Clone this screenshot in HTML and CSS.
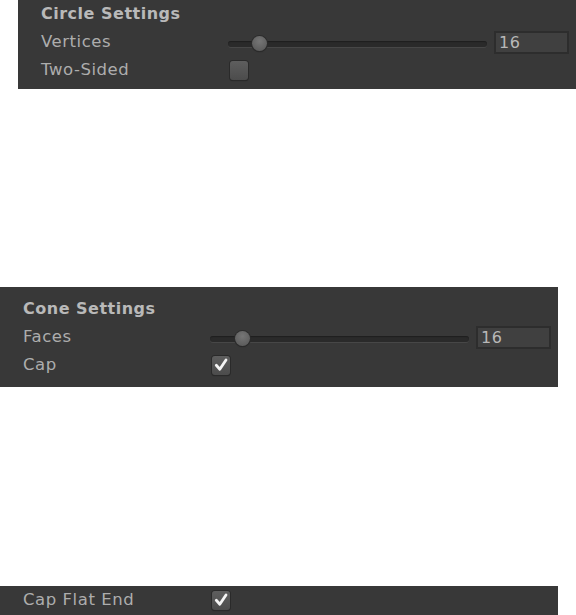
FILE: index.html
```html
<!DOCTYPE html>
<html>
<head>
<meta charset="utf-8">
<link rel="stylesheet" href="styles.css">
</head>
<body>
  <section class="panel panel-circle">
    <div class="row header">Circle Settings</div>
    <div class="row">
      <span class="label">Vertices</span>
      <div class="slider"><div class="track"></div><div class="thumb" style="left:24px"></div></div>
      <div class="field">16</div>
    </div>
    <div class="row">
      <span class="label">Two-Sided</span>
      <span class="checkbox"></span>
    </div>
  </section>

  <section class="panel panel-cone">
    <div class="row header">Cone Settings</div>
    <div class="row">
      <span class="label">Faces</span>
      <div class="slider"><div class="track"></div><div class="thumb" style="left:25px"></div></div>
      <div class="field">16</div>
    </div>
    <div class="row">
      <span class="label">Cap</span>
      <span class="checkbox checked"><svg viewBox="0 0 18 18" width="18" height="18"><path d="M4.3 9.3 L7.8 13.2 L14 4" fill="none" stroke="#f4f4f4" stroke-width="2.8" stroke-linecap="round" stroke-linejoin="round"/></svg></span>
    </div>
  </section>

  <section class="panel panel-end">
    <div class="row">
      <span class="label">Cap Flat End</span>
      <span class="checkbox checked"><svg viewBox="0 0 18 18" width="18" height="18"><path d="M4.3 9.3 L7.8 13.2 L14 4" fill="none" stroke="#f4f4f4" stroke-width="2.8" stroke-linecap="round" stroke-linejoin="round"/></svg></span>
    </div>
  </section>
</body>
</html>
```

FILE: styles.css
```css
html, body {
  margin: 0;
  padding: 0;
  background: #ffffff;
}

body {
  font-family: "DejaVu Sans", "Liberation Sans", sans-serif;
  font-size: 16.5px;
  color: #adadad;
  overflow: hidden;
}

.panel {
  width: 558px;
  background: #383838;
  box-sizing: border-box;
  padding: 8px 7px 8px 23px;
}

.panel-circle {
  margin-left: 18px;
  padding-top: 0;
  padding-bottom: 5px;
}

.panel-cone {
  margin-top: 198px;
}

.panel-end {
  margin-top: 199px;
  padding-top: 0;
  height: 40px;
}

.row {
  display: flex;
  align-items: center;
  height: 28px;
  line-height: 28px;
}

.header {
  font-size: 16px;
  font-weight: bold;
  color: #b9b9b9;
  letter-spacing: 0.5px;
}

.label {
  width: 187px;
  flex: none;
  letter-spacing: 0.55px;
}

.slider {
  position: relative;
  flex: 1;
  height: 16px;
  margin-top: 3px;
}

.track {
  position: absolute;
  left: 0;
  right: 0;
  top: 5px;
  height: 6px;
  border-radius: 3px;
  background: #2a2a2a;
  box-shadow: 0 1px 0 #474747, inset 0 1px 1px #1f1f1f;
}

.thumb {
  position: absolute;
  top: 0;
  width: 15px;
  height: 15px;
  border-radius: 50%;
  background: radial-gradient(circle at 50% 35%, #767676 0%, #626262 60%, #555555 100%);
  box-shadow: 0 0 0 1px #2c2c2c, 0 1px 1px #222;
}

.field {
  flex: none;
  width: 75px;
  height: 23px;
  box-sizing: border-box;
  margin-left: 7px;
  border: 2px solid #2d2d2d;
  background: #404040;
  color: #b8b8b8;
  font-size: 16px;
  line-height: 19px;
  padding-left: 3px;
  letter-spacing: 0.5px;
}

.checkbox {
  flex: none;
  width: 18px;
  height: 19px;
  margin-left: 2px;
  box-sizing: border-box;
  border-radius: 3px;
  background: linear-gradient(#5e5e5e, #4c4c4c);
  box-shadow: 0 0 0 1px #2a2a2a, 0 1px 1px #222;
  display: flex;
  align-items: center;
  justify-content: center;
}

.checkbox svg {
  display: block;
}
```
